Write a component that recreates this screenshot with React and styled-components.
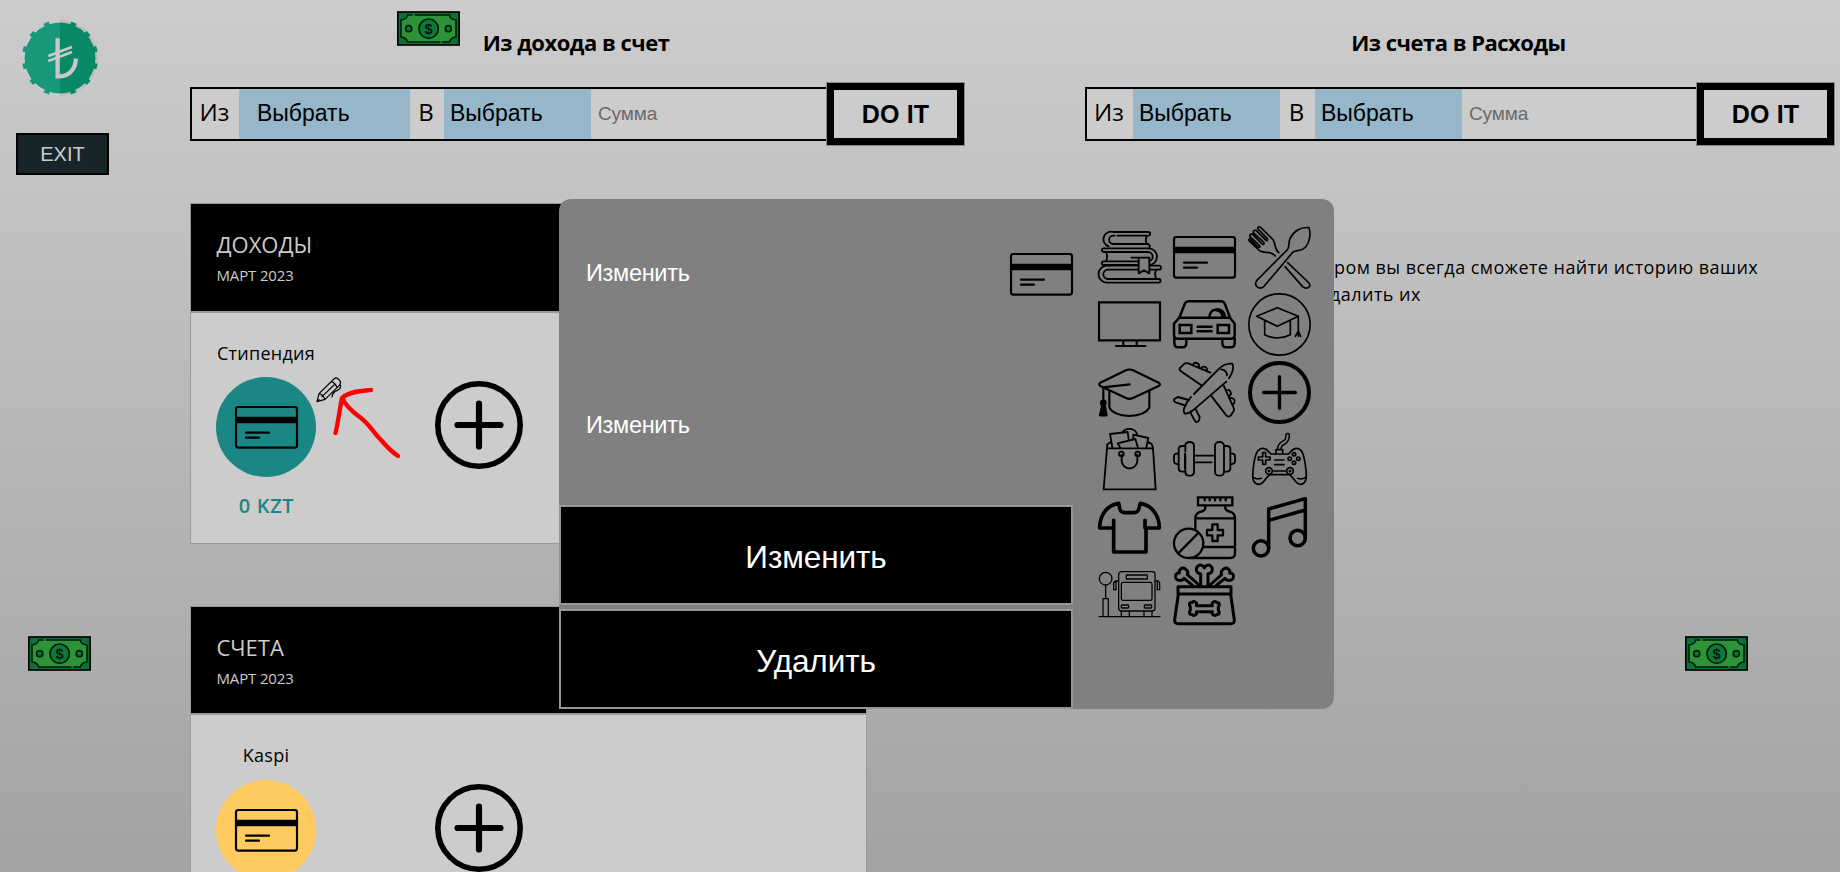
import React from "react";
import styled, { createGlobalStyle } from "styled-components";

const sans = `"Liberation Sans", Arial, sans-serif`;
const human = `"Open Sans", "Noto Sans", sans-serif`;
const surface = "#cccccc";

const GlobalStyle = createGlobalStyle`
  * { box-sizing: border-box; }
  body { margin: 0; font-family: ${human}; color: #000; }
  button, input { font: inherit; border-radius: 0; }
`;

const Page = styled.div`
  position: relative;
  display: flex;
  height: 872px;
  overflow: hidden;
  background: linear-gradient(#cccccc, #a3a3a3);
`;

const Sidebar = styled.aside`
  width: 190px;
  flex: none;
  display: flex;
  flex-direction: column;
  align-items: flex-start;
  padding: 20px 0 0 16px;
`;

const Logo = styled.svg`
  width: 76px;
  height: 76px;
  margin-left: 6px;
`;

const ExitButton = styled.button`
  width: 93px;
  height: 42px;
  margin-top: 37px;
  padding: 0;
  border: 2px solid #000;
  background: #172529;
  color: #ccc;
  font-family: ${sans};
  font-size: 20px;
`;

const Main = styled.main`
  flex: 1;
  min-width: 0;
  padding-top: 26px;
`;

const Transfers = styled.div`
  display: grid;
  grid-template-columns: 774px 749px;
  column-gap: 121px;
`;

const TransferTitle = styled.h2`
  margin: 0 0 29px;
  padding-right: 2px;
  font-size: 22px;
  font-weight: 700;
  line-height: 32px;
  letter-spacing: -0.5px;
  text-align: center;
  white-space: nowrap;
`;

const TransferForm = styled.div`
  display: flex;
  align-items: center;
  height: 54px;
  border: 2px solid #000;
  border-right: 0;
  background: ${surface};
`;

const Preposition = styled.span`
  width: ${(p) => p.$width}px;
  flex: none;
  padding: 0 2px 4px 0;
  text-align: center;
  font-size: 24px;
  line-height: 34px;
`;

const Picker = styled.div`
  flex: none;
  width: ${(p) => p.$width}px;
  height: 50px;
  padding-left: ${(p) => p.$inset}px;
  background: #96b7ca;
  font-family: ${sans};
  font-size: 23px;
  line-height: 49px;
`;

const SumInput = styled.input`
  flex: 1;
  min-width: 0;
  height: 48px;
  padding: 0 0 1px 7px;
  border: 0;
  background: transparent;
  font-family: ${sans};
  font-size: 19px;
  letter-spacing: -0.1px;
  &::placeholder { color: #6a6a6a; opacity: 1; }
`;

const DoButton = styled.button`
  flex: none;
  width: 137px;
  height: 62px;
  margin: -6px 0;
  padding: 0 0 1px;
  border: 7px solid #000;
  box-shadow: 0 0 0 1px #888;
  background: ${surface};
  font-family: ${sans};
  font-size: 25px;
  font-weight: 700;
  line-height: 46px;
  letter-spacing: 0.2px;
`;

const Content = styled.div`
  display: flex;
  align-items: flex-start;
  margin-top: 62px;
`;

const Cards = styled.div`
  display: flex;
  flex-direction: column;
  gap: 62px;
  width: 677px;
  flex: none;
`;

const Card = styled.section`
  height: 341px;
  border: 1px solid #999;
  background: ${surface};
`;

const CardHeader = styled.header`
  height: ${(p) => p.$height}px;
  padding: 25px 0 0 25.5px;
  border-bottom: 2px solid #999;
  background: #000;
  color: #ccc;
`;

const CardTitle = styled.div`
  font-size: 22px;
  line-height: 30px;
`;

const CardMonth = styled.div`
  font-size: 15px;
  line-height: 32px;
  letter-spacing: -0.15px;
`;

const CardBody = styled.div`
  display: flex;
  align-items: flex-start;
  padding: 28px 0 0 25px;
`;

const Item = styled.div`
  width: 100px;
  text-align: center;
  white-space: nowrap;
`;

const ItemName = styled.div`
  margin-bottom: ${(p) => p.$gap}px;
  font-size: 18px;
  line-height: 24px;
  letter-spacing: 0.25px;
`;

const ItemCircle = styled.div`
  position: relative;
  display: flex;
  align-items: center;
  justify-content: center;
  height: 100px;
  border-radius: 50%;
  background: ${(p) => p.$color};
`;

const Amount = styled.div`
  margin-top: 16px;
  padding-left: 1px;
  color: #1b8784;
  font-size: 20px;
  font-weight: 600;
  line-height: 25px;
  letter-spacing: 0.7px;
`;

const Pencil = styled.svg`
  position: absolute;
  left: 100px;
  top: 0;
  width: 26px;
  height: 26px;
`;

const RedArrow = styled.svg`
  position: absolute;
  left: 117px;
  top: 10px;
  width: 68px;
  height: 72px;
`;

const AddButton = styled.svg`
  width: 88px;
  height: 88px;
  margin: ${(p) => p.$top}px 0 0 119px;
`;

const Info = styled.p`
  margin: 51px 0 0 467px;
  font-size: 18px;
  line-height: 27px;
  white-space: nowrap;
`;

const InfoLine = styled.span`
  display: block;
  margin-left: ${(p) => p.$shift || 0}px;
  letter-spacing: 0.45px;
`;

const Modal = styled.div`
  position: absolute;
  left: 559px;
  top: 199px;
  width: 775px;
  height: 510px;
  display: flex;
  border-radius: 12px 12px 12px 0;
  background: #808080;
`;

const ModalForm = styled.div`
  width: 514px;
  color: #fff;
  font-family: ${sans};
`;

const ModalRow = styled.div`
  display: flex;
  align-items: center;
  justify-content: space-between;
  height: ${(p) => p.$height}px;
  padding-left: 26px;
  font-size: 23.5px;
  letter-spacing: -0.3px;
`;

const ModalLabel = styled.span`
  padding: 0 0 ${(p) => p.$lift || 0}px 1px;
`;

const ModalButton = styled.button`
  display: block;
  width: 100%;
  height: 100px;
  margin-top: ${(p) => p.$gap}px;
  padding: 5px 0 0;
  border: 2px solid #969696;
  background: #000;
  color: #fff;
  font-family: ${sans};
  font-size: 31.5px;
  letter-spacing: -0.1px;
`;

const IconGrid = styled.div`
  display: grid;
  grid-template-columns: repeat(3, 63px);
  grid-auto-rows: 63px;
  gap: 4.5px 12px;
  padding: 26.5px 0 0 25px;
`;

const Glyph = styled.svg`
  display: block;
  width: 63px;
  height: 63px;
  flex: none;
  overflow: visible;
`;

const Bill = styled.svg`
  position: absolute;
  left: ${(p) => p.$x}px;
  top: ${(p) => p.$y}px;
  width: 63px;
  height: 35px;
`;

const Icon = ({ w = 5, children }) => (
  <Glyph viewBox="0 0 189 189" fill="none" stroke="#000" strokeWidth={w} strokeLinejoin="round" strokeLinecap="round">
    {children}
  </Glyph>
);

const CardIcon = () => (
  <Icon w={6.5}>
    <rect x="3" y="33" width="183" height="122" rx="7" />
    <path d="M3 72H186" strokeWidth="20" strokeLinecap="butt" />
    <path d="M33 110H102M33 125H72" strokeWidth="6.5" />
  </Icon>
);

const Books = () => (
  <Icon w={5.5}>
    <path d="M58 29H147M50 29H46a12 12 0 0 0 0 25H150M147 30q-7 12 0 24" />
    <path d="M151 29a5 5 0 0 0 0-11H46a22 22 0 0 0-14 43M150 54q7 3 5 10" />
    <path d="M17 67H152a25 25 0 0 1 0 50H17a5 5 0 0 1 0-11H150a14 14 0 0 0 0-28H17a5 5 0 0 1 0-11z" />
    <path d="M24 79q7 13 0 26M175 131q-7 13 0 28" />
    <path d="M183 119H27a25 25 0 0 0 0 51H182a5 5 0 0 0 0-11H30a14 14 0 0 1 0-28H183a5 5 0 0 0 0-12z" />
    <path d="M100 95H154V142L138 133L122 142V95" fill="#808080" />
  </Icon>
);

const Cutlery = () => (
  <Icon>
    <path d="M183 5C158 2 136 16 126 38C121 50 125 60 119 70L26 164c-10 15 8 29 21 18L135 78c12-6 26-2 38-15c12-14 16-40 10-58z" />
    <path d="M119 110L180 168Q190 178 182 184T164 182L111 122" />
    <path d="M92 80C78 68 84 54 75 41L38 4Q30 0 29 8L58 38Q60 46 54 43L24 13Q15 11 16 20L48 50Q49 57 42 54L14 25Q4 22 6 32L36 60Q36 67 29 62L7 40Q1 36 3 44C15 56 26 66 36 75C52 84 66 72 82 90" />
  </Icon>
);

const Tv = () => (
  <Icon w={6.5}>
    <path d="M3 28H186V142H3ZM76 143V158M116 143V158M54 159H142" strokeLinejoin="miter" />
  </Icon>
);

const Car = () => (
  <Icon w={7.5}>
    <path d="M19 74L36 31Q39 25 46 25H145Q152 25 155 31L171 74" />
    <path d="M19 74H171L185 92V126Q185 137 174 137H14Q3 137 3 126V92Z" />
    <path d="M4 136V150Q4 163 16 163H28Q40 163 40 150V138M148 138V150Q148 163 160 163H173Q185 163 185 150V136" />
    <path d="M20 96H55V120H20ZM134 96H168V120H134ZM74 101H116M74 115H116" strokeLinejoin="miter" />
    <path d="M109 72a23 23 0 0 1 47 0M130 52Q148 54 148 72" />
  </Icon>
);

const GradRound = () => (
  <Icon>
    <circle cx="94.500" cy="94.500" r="92" />
    <path d="M26 70L88 44L151 70L88 100ZM50 82V125Q88 145 127 125V82M151 70V114L142 130M151 114L158 130M151 114V130" />
  </Icon>
);

const GradCap = () => (
  <Icon w={6.5}>
    <path d="M7 65L84 28Q94 23 105 28L182 65Q190 70 182 75L105 111Q94 116 84 111L7 75Q0 70 7 65Z" />
    <path d="M34 88V140Q46 162 94 165Q142 162 154 140V88M95 70L16 79V120" />
    <circle cx="16" cy="126" r="7" fill="#000" />
    <path d="M12 136H21L26 163H6Z" fill="#000" />
  </Icon>
);

const Plane = () => (
  <Icon w={5.5}>
    <path d="M63 99L136 25Q154 6 178 8Q186 24 168 52M160 62L60 148Q40 162 34 156Q28 148 42 124L54 108" />
    <path d="M112 35L46 7Q38 5 32 10L20 22Q18 28 26 32L84 72" />
    <path d="M116 106L160 163Q166 170 173 164L182 150Q185 144 180 136L152 74" />
    <path d="M60 11a9 9 0 0 1 17 8M84 22a9 9 0 0 1 17 9M160 88a9 9 0 0 1 8 17M171 112a9 9 0 0 1 8 18" />
    <path d="M38 134L8 124Q0 120 4 114L14 108L48 117M52 154L66 180Q72 188 78 178L80 168L67 143M144 25Q161 26 162 43" />
  </Icon>
);

const PlusCircle = () => (
  <Icon w={10}>
    <circle cx="94.500" cy="94.500" r="88.500" strokeWidth="12" />
    <path d="M94.500 47V142M47 94.500H142" />
  </Icon>
);

const Bag = () => (
  <Icon w={5.5}>
    <path d="M27 61H165L173 184H17Z" strokeLinejoin="miter" />
    <path d="M27 60L28 49L38 43M165 60L161 48L152 43M43 58L36 18L89 12L92 34M74 12Q82 0 100 3Q116 8 117 20M66 58L59 46L112 33L120 59M106 34V20L151 30L145 58" />
    <circle cx="70" cy="78" r="7" />
    <circle cx="119" cy="78" r="7" />
    <path d="M71 80V98a23 23 0 0 0 47 0V80" />
  </Icon>
);

const Dumbbell = () => (
  <Icon w={5.5}>
    <path d="M16 76Q3 76 3 84V100Q3 108 16 109M173 76Q186 76 186 84V100Q186 108 173 109" />
    <path d="M36 54H28Q17 54 17 64V121Q17 131 28 131H36M153 54H161Q172 54 172 64V121Q172 131 161 131H153M36 76V120" />
    <path d="M37 70V54Q37 42 50 42T63 54V131Q63 143 50 143T37 131V80" />
    <rect x="126" y="42" width="27" height="101" rx="12" />
    <path d="M63 83H126M63 103H116" />
  </Icon>
);

const Gamepad = () => (
  <Icon w={5}>
    <path d="M94 66C92 38 120 52 119 22" strokeWidth="15" />
    <path d="M94 66C92 38 120 52 119 22" strokeWidth="6" stroke="#808080" />
    <path d="M84 77V65H104V77" fill="#808080" />
    <path d="M46 61C28 60 22 78 17 110C13 140 10 168 32 169C50 168 52 146 66 140H124C138 146 140 168 158 169C179 168 176 140 172 110C167 78 162 60 144 61C132 62 130 70 122 78H68C60 70 58 62 46 61Z" />
    <path d="M44 74H53V87H66V96H53V109H44V96H31V87H44ZM80 96H108M80 110H108M74 129H115M16 148Q26 156 40 151M173 148Q163 156 149 151" />
    <circle cx="138" cy="79" r="5" />
    <circle cx="125" cy="92" r="5" />
    <circle cx="151" cy="92" r="5" />
    <circle cx="138" cy="104" r="5" />
    <circle cx="63" cy="129" r="10" fill="#808080" />
    <circle cx="126" cy="129" r="10" fill="#808080" />
    <circle cx="63" cy="129" r="2" />
    <circle cx="126" cy="129" r="2" />
  </Icon>
);

const Shirt = () => (
  <Icon w={11}>
    <path d="M62 22C66 28 60 49 80 50H108C128 49 122 28 127 22C160 27 184 56 184 96H144V168H47V96H5C5 56 28 27 62 22ZM47 96V73M141 96V73" />
  </Icon>
);

const Pills = () => (
  <Icon w={7}>
    <path d="M75 4H178V28H75ZM95 5V13M110 5V13M126 5V13M142 5V13M158 5V13" strokeLinejoin="miter" />
    <path d="M97 30Q99 44 84 47Q67 51 67 68V98M157 30Q155 44 170 47Q186 51 186 68V172Q186 186 172 186H50M67 67H186M92 153H186" />
    <path d="M118 85H134V102H150V118H134V135H118V118H102V102H118Z" />
    <circle cx="47" cy="142" r="44" />
    <path d="M18 170L74 113" />
  </Icon>
);

const Music = () => (
  <Icon w={10.5}>
    <circle cx="39" cy="157" r="23" />
    <circle cx="149" cy="126" r="23" />
    <path d="M62 157V39L172 8V126M62 73L172 42" />
  </Icon>
);

const Bus = () => (
  <Icon w={3.8}>
    <circle cx="23" cy="47" r="19" />
    <path d="M23 66V107M15 107H31V161H15ZM3 161H186" />
    <rect x="62" y="26" width="109" height="118" rx="8" />
    <rect x="85" y="36" width="63" height="12" />
    <rect x="70" y="58" width="92" height="54" rx="5" />
    <rect x="70" y="126" width="22" height="9" rx="2" />
    <rect x="139" y="126" width="22" height="9" rx="2" />
    <path d="M70 145V161M94 145V161M138 145V161M162 145V161M60 54H52L47 60V80H54V54M173 54H181L185 60V80H178V54" />
  </Icon>
);

const DogFood = () => (
  <Icon w={9}>
    <path d="M83 68V32C70 32 67 18 73 11C80 3 91 6 94 15C97 6 108 3 115 11C121 18 118 32 105 32V68" />
    <path d="M60 68L33 46C28 55 14 54 9 47C4 38 10 29 19 30C16 21 26 12 36 17C44 22 46 29 43 35L78 66" />
    <path d="M129 68L156 46C161 55 175 54 180 47C185 38 179 29 170 30C173 21 163 12 153 17C145 22 143 29 146 35L111 66" />
    <path d="M15 71H174V93H15ZM16 94L5 170Q4 182 16 182H173Q185 182 184 170L173 94" />
    <path d="M70 128H118C114 118 126 112 132 119C139 117 141 127 136 131V142C141 146 139 156 132 154C126 161 114 155 118 146H70C74 155 62 161 56 154C49 156 47 146 52 142V131C47 127 49 117 56 119C62 112 74 118 70 128Z" />
  </Icon>
);

const teeth = [21.5, 49, 76, 103, 131, 159, 201, 229, 257, 284, 311, 338.5];

const TurkishCoin = () => (
  <Logo viewBox="0 0 76 76">
    <path d="M38 1.500a36.500 36.500 0 0 0 0 73" fill="#d2d2d2" />
    <path d="M38 0a38 38 0 0 1 0 76" fill="#bcbcbc" />
    {teeth.map((a) => (
      <rect key={a} x="35.200" y="0" width="5.600" height="8" fill={a > 180 ? "#19977b" : "#098868"} transform={`rotate(${a} 38 38)`} />
    ))}
    <path d="M38 2.500a35.500 35.500 0 0 0 0 71z" fill="#19977b" />
    <path d="M38 2.500a35.500 35.500 0 0 1 0 71z" fill="#098868" />
    <g fill="none" stroke="#c8c8c8" strokeWidth="4.300">
      <path d="M35.600 18.200V56.300H38C48 56.300 53.800 48 53.800 38.500" />
      <path d="M26.300 36L50 27M26.300 41L50 32" strokeWidth="2.800" />
    </g>
  </Logo>
);

const Banknote = ({ x, y }) => (
  <Bill $x={x} $y={y} viewBox="0 0 189 105">
    <rect x="2.500" y="3" width="184" height="99" fill="#0b6f38" stroke="#000" strokeWidth="5" />
    <path d="M32 12H157Q158 25 177 27V78Q160 80 157 93H32Q29 80 12 78V27Q30 25 32 12Z" fill="#2d9339" stroke="#001a08" strokeWidth="4.500" />
    <path d="M46 12H54M130 93H136" stroke="#2d9339" strokeWidth="5" />
    <circle cx="95" cy="53" r="29" fill="#0b7a3d" stroke="#001a08" strokeWidth="5" />
    <circle cx="35" cy="53" r="9" fill="#0b7a3d" stroke="#001a08" strokeWidth="5" />
    <circle cx="154" cy="53" r="9" fill="#0b7a3d" stroke="#001a08" strokeWidth="5" />
    <text x="95" y="68" textAnchor="middle" fontFamily="Liberation Sans" fontWeight="700" fontSize="44" fill="#001a08">$</text>
  </Bill>
);

const AddCircle = ({ top }) => (
  <AddButton $top={top} viewBox="0 0 88 88" fill="none" stroke="#000" strokeLinecap="round">
    <circle cx="44" cy="44" r="41.200" strokeWidth="5.600" />
    <path d="M44 22.500V65.500M22.500 44H65.500" strokeWidth="6.200" />
  </AddButton>
);

const EditMark = () => (
  <Pencil viewBox="0 0 78 78" fill="none" stroke="#000" strokeWidth="3.600" strokeLinejoin="round" strokeLinecap="round">
    <path d="M3 74L9 50L54 6Q60 0 66 5L72 12Q76 19 70 25L27 67ZM9 50Q20 52 27 67M46 14Q58 18 63 32M18 59L54 24M3 74L9 68" />
    <path d="M73 24Q77 34 64 40Q49 46 48 60" />
  </Pencil>
);

const Transfer = ({ title, fromWidth, first, inset, toWidth }) => (
  <div>
    <TransferTitle>{title}</TransferTitle>
    <TransferForm>
      <Preposition $width={fromWidth}>Из</Preposition>
      <Picker $width={first} $inset={inset}>Выбрать</Picker>
      <Preposition $width={toWidth}>В</Preposition>
      <Picker $width={147} $inset={6}>Выбрать</Picker>
      <SumInput placeholder="Сумма" />
      <DoButton>DO IT</DoButton>
    </TransferForm>
  </div>
);

const gallery = [Books, CardIcon, Cutlery, Tv, Car, GradRound, GradCap, Plane, PlusCircle, Bag, Dumbbell, Gamepad, Shirt, Pills, Music, Bus, DogFood];

export default function App() {
  return (
    <>
      <GlobalStyle />
      <Page>
        <Sidebar>
          <TurkishCoin />
          <ExitButton>EXIT</ExitButton>
        </Sidebar>
        <Main>
          <Transfers>
            <Transfer title="Из дохода в счет" fromWidth={47} first={171} inset={18} toWidth={34} />
            <Transfer title="Из счета в Расходы" fromWidth={46} first={147} inset={6} toWidth={35} />
          </Transfers>
          <Content>
            <Cards>
              <Card>
                <CardHeader $height={109}>
                  <CardTitle>ДОХОДЫ</CardTitle>
                  <CardMonth>МАРТ 2023</CardMonth>
                </CardHeader>
                <CardBody>
                  <Item>
                    <ItemName $gap={12}>Стипендия</ItemName>
                    <ItemCircle $color="#1b8784">
                      <CardIcon />
                      <EditMark />
                      <RedArrow viewBox="0 0 68 72" fill="none" stroke="#f00" strokeWidth="4.300" strokeLinecap="round" strokeLinejoin="round">
                        <path d="M38 3C30 3.500 17 4 9 11C7 20 5 36 2.500 46M9 11C13 19 21 26 28 31C36 37 40 45 49 54C54 60 59 65 65 69" />
                      </RedArrow>
                    </ItemCircle>
                    <Amount>0 KZT</Amount>
                  </Item>
                  <AddCircle top={40} />
                </CardBody>
              </Card>
              <Card>
                <CardHeader $height={108}>
                  <CardTitle>СЧЕТА</CardTitle>
                  <CardMonth>МАРТ 2023</CardMonth>
                </CardHeader>
                <CardBody>
                  <Item>
                    <ItemName $gap={13}>Kaspi</ItemName>
                    <ItemCircle $color="#ffca5f"><CardIcon /></ItemCircle>
                  </Item>
                  <AddCircle top={41} />
                </CardBody>
              </Card>
            </Cards>
            <Info>
              <InfoLine>ром вы всегда сможете найти историю ваших</InfoLine>
              <InfoLine $shift={-4}>далить их</InfoLine>
            </Info>
          </Content>
        </Main>
        <Banknote x={397} y={11} />
        <Banknote x={28} y={636} />
        <Banknote x={1685} y={636} />
        <Modal>
          <ModalForm>
            <ModalRow $height={151}><ModalLabel $lift={2}>Изменить</ModalLabel><CardIcon /></ModalRow>
            <ModalRow $height={150}><ModalLabel>Изменить</ModalLabel></ModalRow>
            <ModalButton $gap={5}>Изменить</ModalButton>
            <ModalButton $gap={4}>Удалить</ModalButton>
          </ModalForm>
          <IconGrid>
            {gallery.map((Shape, i) => <Shape key={i} />)}
          </IconGrid>
        </Modal>
      </Page>
    </>
  );
}
